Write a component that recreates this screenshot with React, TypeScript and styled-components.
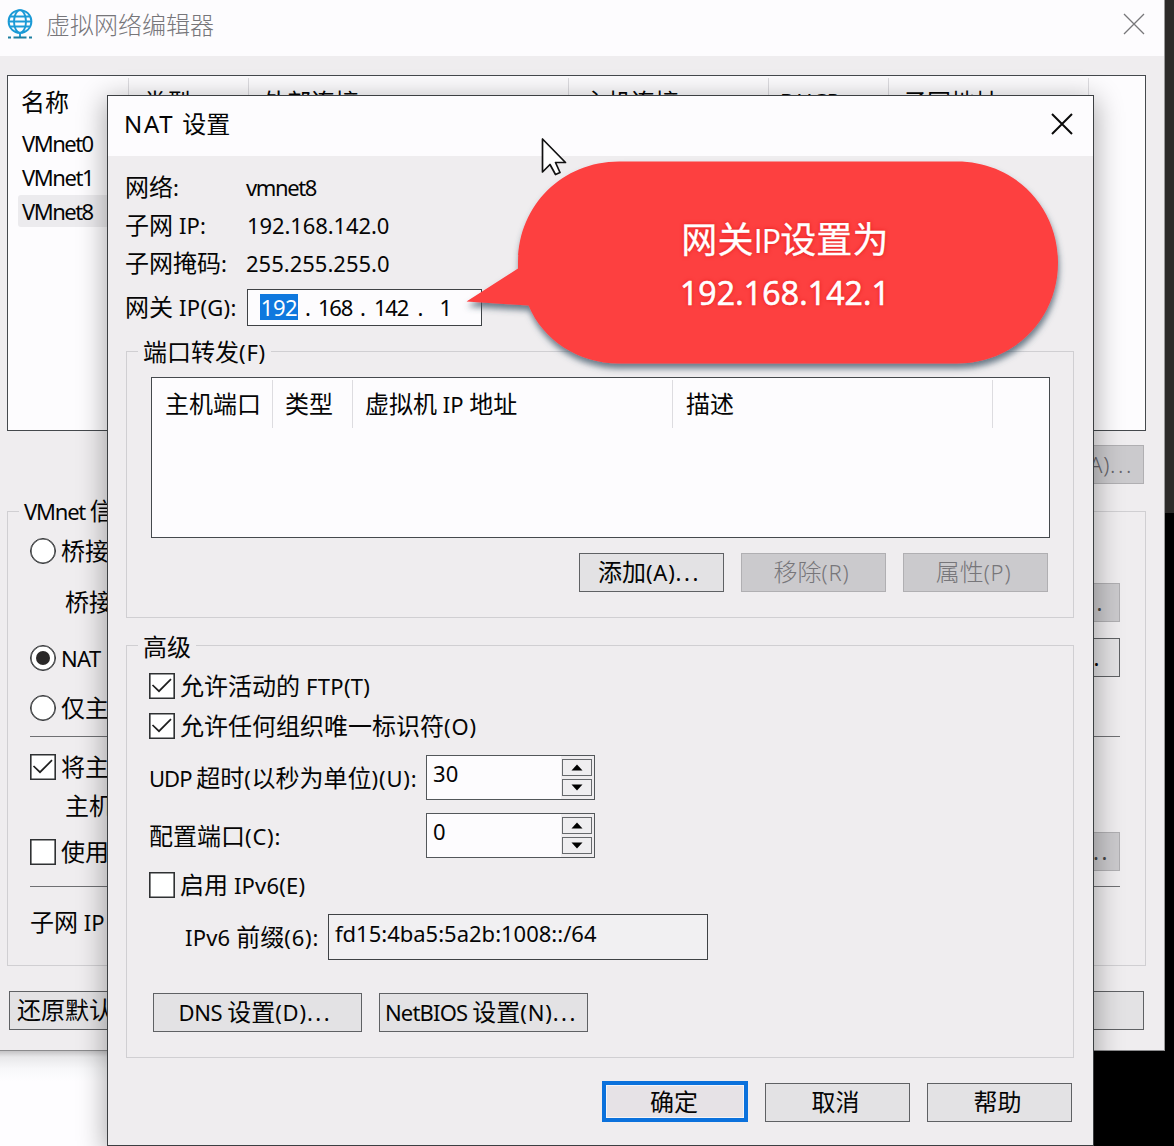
import React from "react";
import styled, { createGlobalStyle, css } from "styled-components";

const Global = createGlobalStyle`
  * { box-sizing: border-box; }
  html, body { margin: 0; padding: 0; overflow: hidden; }
  body { background: #000; font-family: "Noto Sans", "Noto Sans CJK SC", sans-serif; }
`;

const Desktop = styled.div`
  position: relative;
  width: 1174px;
  height: 1146px;
  overflow: hidden;
  background:
    linear-gradient(#2d2b29, #2d2b29) 1165px 0 / 9px 513px no-repeat,
    linear-gradient(#c4c3c5, #e8e8ea 6px, #f8f8fa 18px, #fefdff 30px) 0 1051px / 345px 95px no-repeat,
    #000;
`;

const Window = styled.section<{ $front?: boolean }>`
  position: absolute;
  display: flex;
  flex-direction: column;
  background: #efedef;
  ${(p) =>
    p.$front
      ? css`
          left: 107px; top: 95px; width: 987px; height: 1051px;
          border: 1px solid #3c3f42;
          box-shadow: 0 6px 26px 2px rgba(0, 0, 0, 0.32);
        `
      : css`
          left: 0; top: 0; width: 1165px; height: 1051px;
          border-right: 1px solid #9a9a9a;
          border-bottom: 1px solid #8b8b8d;
        `}
`;

const TitleBar = styled.header<{ $h: number; $pl: number; $pr: number; $pb: number }>`
  display: flex;
  align-items: center;
  flex: none;
  height: ${(p) => p.$h}px;
  padding: 0 ${(p) => p.$pr}px ${(p) => p.$pb}px ${(p) => p.$pl}px;
  background: #fdfcfe;
`;

const Spacer = styled.div`flex: 1;`;

const Line = styled.span<{ $size: number; $color: string; $weight: number; $dy: number }>`
  display: block;
  white-space: pre;
  line-height: 30px;
  font-size: ${(p) => p.$size}px;
  font-weight: ${(p) => p.$weight};
  color: ${(p) => p.$color};
  margin-top: ${(p) => p.$dy}px;
`;

const Latin = styled.span<{ $size: number; $ls: number }>`
  font-size: ${(p) => p.$size}px;
  letter-spacing: ${(p) => p.$ls}px;
`;

type TextProps = { children: string; size?: number; latin?: number; ls?: number; color?: string; weight?: number; dy?: number };

/* Chinese runs use the full size; Latin runs are slightly smaller with their own tracking. */
function Text({ children, size = 24, latin = 22, ls = 0.2, color = "#050505", weight = 400, dy = 0 }: TextProps) {
  const runs = children.split(/([\u3400-\u9fff]+|\.\.\.)/).filter(Boolean);
  return (
    <Line $size={size} $color={color} $weight={weight} $dy={dy}>
      {runs.map((r, i) =>
        /[\u3400-\u9fff]/.test(r) ? r : (
          <Latin key={i} $size={latin} $ls={r === "..." ? 2.6 : /^[()]/.test(r) ? 0.8 : ls}>{r}</Latin>
        )
      )}
    </Line>
  );
}

const Body = styled.div<{ $pl: number; $pr: number }>`
  display: flex;
  flex-direction: column;
  padding: 0 ${(p) => p.$pr}px 0 ${(p) => p.$pl}px;
`;

const Row = styled.div<{ $h?: number; $mt?: number; $pl?: number; $gap?: number; $end?: boolean; $pr?: number }>`
  display: flex;
  flex: none;
  align-items: ${(p) => (p.$end ? "flex-end" : "center")};
  justify-content: ${(p) => (p.$end ? "flex-end" : "flex-start")};
  height: ${(p) => p.$h ?? 30}px;
  margin-top: ${(p) => p.$mt ?? 0}px;
  padding-left: ${(p) => p.$pl ?? 0}px;
  padding-right: ${(p) => p.$pr ?? 0}px;
  gap: ${(p) => p.$gap ?? 0}px;
`;

const LabelCell = styled.div<{ $w: number }>`
  flex: none;
  width: ${(p) => p.$w}px;
`;

const Group = styled.div<{ $h: number; $mt: number; $pl: number; $pr: number; $ml?: number }>`
  display: flex;
  flex-direction: column;
  flex: none;
  height: ${(p) => p.$h}px;
  margin-top: ${(p) => p.$mt}px;
  margin-left: ${(p) => p.$ml ?? 0}px;
  padding: 0 ${(p) => p.$pr}px 0 ${(p) => p.$pl}px;
  border: 1px solid #d0cfd2;
`;

const Legend = styled.div<{ $ml: number; $up: number }>`
  width: fit-content;
  height: 30px;
  margin: -${(p) => p.$up}px 0 0 ${(p) => p.$ml}px;
  padding: 0 5px;
  background: #efedef;
`;

const ListBox = styled.div<{ $h: number; $w: number; $mt: number }>`
  flex: none;
  width: ${(p) => p.$w}px;
  height: ${(p) => p.$h}px;
  margin-top: ${(p) => p.$mt}px;
  border: 1px solid #45494d;
  background: #fdfcfe;
`;

const ListHead = styled.div`
  display: flex;
  height: 50px;
  padding-top: 2px;
`;

const Column = styled.div<{ $w: number; $pl?: number }>`
  display: flex;
  align-items: center;
  flex: none;
  height: 48px;
  width: ${(p) => p.$w}px;
  padding-left: ${(p) => p.$pl ?? 13}px;
  border-right: 1px solid #dddce0;
`;

const ListRow = styled.div<{ $selected?: boolean }>`
  display: flex;
  align-items: center;
  width: 240px;
  height: 32px;
  margin: 0 0 2px 10px;
  padding-left: 4px;
  border-radius: 3px;
  background: ${(p) => (p.$selected ? "#ecebee" : "transparent")};
`;

const Button = styled.button<{ $w: number; $kind?: "disabled" | "primary"; $left?: boolean; $tail?: number }>`
  display: flex;
  align-items: center;
  justify-content: center;
  flex: none;
  width: ${(p) => p.$w}px;
  height: 39px;
  padding: 0 4px 2px 0;
  font-family: inherit;
  border: 1px solid #5f6164;
  background: #e3e2e4;
  ${(p) => p.$kind === "disabled" && css`border-color: #b0afb2; background: #cbcacd;`}
  ${(p) => p.$kind === "primary" && css`height: 41px; padding: 0 2px 0 0; border: 4px solid #0b71dc; background: #e6e2e6; box-shadow: inset 0 0 0 1px #f4f4f8;`}
  ${(p) => p.$left && css`justify-content: flex-start; padding-left: 7px;`}
  ${(p) => p.$tail !== undefined && css`justify-content: flex-end; padding-right: ${p.$tail}px;`}
`;

const Field = styled.div<{ $w: number; $h: number; $plain?: boolean }>`
  display: flex;
  align-items: center;
  flex: none;
  width: ${(p) => p.$w}px;
  height: ${(p) => p.$h}px;
  padding: 0 0 0 6px;
  border: 1px solid #3f4245;
  background: ${(p) => (p.$plain ? "#f1f0f2" : "#fdfcfe")};
`;

const IpField = styled(Field)`
  padding: 0 0 0 12px;
`;

const Octet = styled.div<{ $w: number; $selected?: boolean }>`
  display: flex;
  justify-content: center;
  align-items: center;
  flex: none;
  width: ${(p) => p.$w}px;
  height: 26px;
  background: ${(p) => (p.$selected ? "#0f78de" : "transparent")};
`;

const SpinBox = styled.div`
  display: flex;
  width: 169px;
  height: 45px;
  border: 1px solid #53575a;
  background: #efedef;
`;
const SpinValue = styled.div`
  display: flex;
  align-items: center;
  width: 134px;
  padding-left: 6px;
  background: #fdfcfe;
`;
const SpinButtons = styled.div`
  display: flex;
  flex-direction: column;
  gap: 3px;
  padding: 3px 0 0 1px;
`;
const SpinButton = styled.div`
  display: flex;
  align-items: center;
  justify-content: center;
  width: 30px;
  height: 17px;
  border: 1px solid #66696c;
  background: #efeef0;
`;

const CheckSquare = styled.div`
  display: flex;
  align-items: center;
  justify-content: center;
  flex: none;
  width: 26px;
  height: 26px;
  margin-right: 5px;
  border: 1px solid #2f3133;
  box-shadow: inset 0 0 0 0.6px #2f3133;
  background: #fff;
`;
const RadioCircle = styled(CheckSquare)`
  border-radius: 50%;
`;
const RadioDot = styled.div`
  width: 14px;
  height: 14px;
  border-radius: 50%;
  background: #2a2828;
`;
const Divider = styled.div<{ $mt: number }>`
  flex: none;
  height: 1px;
  margin-top: ${(p) => p.$mt}px;
  margin-left: 22px;
  background: #6f7073;
`;

const Callout = styled.div`
  position: absolute;
  left: 460px;
  top: 155px;
  width: 615px;
  height: 225px;
`;
const CalloutText = styled.div`
  position: absolute;
  left: 58px;
  top: 6px;
  width: 540px;
  height: 203px;
  display: flex;
  flex-direction: column;
  align-items: center;
  padding: 52px 6px 0 0;
  color: #fff;
  font-family: "Open Sans", "Noto Sans CJK SC", sans-serif;
  text-shadow: 0 0 4px rgba(215, 0, 0, 0.65);
`;
const CalloutLine = styled.div`
  height: 53px;
  line-height: 53px;
  font-size: 32px;
  letter-spacing: 0.15px;
  white-space: nowrap;
  -webkit-text-stroke: 0.7px #fff;
`;
const CalloutCjk = styled.span`
  font-size: 36px;
  -webkit-text-stroke: 0.3px #fff;
`;
const CalloutIp = styled.span`
  letter-spacing: -0.8px;
  -webkit-text-stroke: 0.2px #fff;
`;
const CursorBox = styled.div`
  position: absolute;
  left: 540px;
  top: 136px;
  width: 30px;
  height: 42px;
`;

const CheckMark = () => (
  <svg width="22" height="22" viewBox="0 0 22 22" fill="none" stroke="#1f1f1f" strokeWidth="1.7">
    <path d="M1.500 10 L8 16.200 L20 4.200" />
  </svg>
);

function Check({ label, on, ls }: { label: string; on?: boolean; ls?: number }) {
  return (
    <>
      <CheckSquare>{on && <CheckMark />}</CheckSquare>
      <Text ls={ls}>{label}</Text>
    </>
  );
}

function Radio({ label, on }: { label: string; on?: boolean }) {
  return (
    <>
      <RadioCircle>{on && <RadioDot />}</RadioCircle>
      <Text ls={-0.6}>{label}</Text>
    </>
  );
}

const CloseIcon = ({ color, w }: { color: string; w: number }) => (
  <svg width="22" height="22" viewBox="0 0 22 22" stroke={color} strokeWidth={w} fill="none">
    <path d="M1 1 L21 21 M21 1 L1 21" />
  </svg>
);

const Globe = () => (
  <svg width="28" height="32" viewBox="0 0 28 32" fill="none" stroke="#1b9ad6" strokeWidth="1.9">
    <circle cx="14" cy="13.500" r="11.4" />
    <ellipse cx="14" cy="13.500" rx="6" ry="11.4" />
    <path d="M14 24.900V29 M4 8.500H24 M4 18.500H24 M2.600 13.500H25.400" />
    <path d="M2 29.500h3 M7.500 29.500H20.500 M23 29.500h3" stroke="#1d7fa0" strokeWidth="1.8" />
  </svg>
);

const Arrow = ({ down }: { down?: boolean }) => (
  <svg width="12" height="7" viewBox="0 0 12 7">
    <path d={down ? "M0.500 0.500H11.500L6 6.500Z" : "M0.500 6.500H11.500L6 0.500Z"} fill="#000" />
  </svg>
);

function Spin({ value }: { value: string }) {
  return (
    <SpinBox>
      <SpinValue><Text dy={-9}>{value}</Text></SpinValue>
      <SpinButtons>
        <SpinButton><Arrow /></SpinButton>
        <SpinButton><Arrow down /></SpinButton>
      </SpinButtons>
    </SpinBox>
  );
}

function EditorWindow() {
  return (
    <Window>
      <TitleBar $h={56} $pl={6} $pr={19} $pb={8}>
        <Globe />
        <LabelCell $w={12} />
        <Text color="#77767a" weight={300} dy={1}>虚拟网络编辑器</Text>
        <Spacer />
        <CloseIcon color="#77777a" w={1.3} />
      </TitleBar>
      <Body $pl={7} $pr={18}>
        <ListBox $w={1139} $h={356} $mt={19}>
          <ListHead>
            <Column $w={121}><Text>名称</Text></Column>
            <Column $w={120} $pl={14}><Text>类型</Text></Column>
            <Column $w={320} $pl={14}><Text>外部连接</Text></Column>
            <Column $w={200} $pl={14}><Text>主机连接</Text></Column>
            <Column $w={120} $pl={11}><Text dy={-2}>DHCP</Text></Column>
            <Column $w={200} $pl={14}><Text>子网地址</Text></Column>
          </ListHead>
          <Row $h={1} />
          <ListRow><Text ls={-1.5}>VMnet0</Text></ListRow>
          <ListRow><Text ls={-1.4}>VMnet1</Text></ListRow>
          <ListRow $selected><Text ls={-1.5}>VMnet8</Text></ListRow>
        </ListBox>
        <Row $h={39} $mt={14} $end $pr={2}>
          <Button $w={180} $kind="disabled" $tail={9}><Text color="#66656a" weight={300} ls={2}>添加网络(A)...</Text></Button>
        </Row>
        <Group $h={455} $mt={27} $pl={0} $pr={25}>
          <Legend $ml={11} $up={16}><Text ls={-1.2}>VMnet 信</Text></Legend>
          <Row $mt={10} $pl={22}><Radio label="桥接" /></Row>
          <Row $h={39} $mt={17} $pl={57}>
            <Text dy={-1}>桥接</Text><Spacer />
            <Button $w={120} $kind="disabled" $tail={14}><Text color="#444">自动设置...</Text></Button>
          </Row>
          <Row $h={39} $mt={16} $pl={22}>
            <Radio label="NAT" on /><Spacer />
            <Button $w={140} $tail={17}><Text>NAT 设置...</Text></Button>
          </Row>
          <Row $mt={16} $pl={22}><Radio label="仅主" /></Row>
          <Divider $mt={13} />
          <Row $mt={15} $pl={22}><Check label="将主" on /></Row>
          <Row $mt={9} $pl={57}><Text>主机</Text></Row>
          <Row $h={39} $mt={11} $pl={22}>
            <Check label="使用" /><Spacer />
            <Button $w={160} $kind="disabled" $tail={9}><Text color="#444">DHCP 设置...</Text></Button>
          </Row>
          <Divider $mt={15} />
          <Row $mt={20} $pl={22}><Text ls={0}>子网 IP</Text></Row>
        </Group>
        <Row $h={39} $mt={25} $pl={2}>
          <Button $w={160} $left><Text>还原默认</Text></Button>
          <Spacer />
          <Button $w={145} />
          <LabelCell $w={2} />
        </Row>
      </Body>
    </Window>
  );
}

function NatWindow() {
  return (
    <Window $front>
      <TitleBar $h={60} $pl={16} $pr={20} $pb={4}>
        <Text latin={24} ls={1.7}>NAT 设置</Text>
        <Spacer />
        <CloseIcon color="#0a0a0a" w={2} />
      </TitleBar>
      <Body $pl={17} $pr={19}>
        <Row $h={38} $mt={12}><LabelCell $w={121}><Text>网络:</Text></LabelCell><Text ls={-1.4}>vmnet8</Text></Row>
        <Row $h={38}><LabelCell $w={122}><Text>子网 IP:</Text></LabelCell><Text ls={-0.1}>192.168.142.0</Text></Row>
        <Row $h={38}><LabelCell $w={121}><Text ls={0.5}>子网掩码:</Text></LabelCell><Text ls={0}>255.255.255.0</Text></Row>
        <Row $h={38} $mt={6}>
          <LabelCell $w={122}><Text ls={0.3}>网关 IP(G):</Text></LabelCell>
          <IpField $w={235} $h={37}>
            <Octet $w={38} $selected><Text color="#fff" ls={-0.5}>192</Text></Octet>
            <Octet $w={20}><Text>.</Text></Octet>
            <Octet $w={34}><Text ls={-1.2}>168</Text></Octet>
            <Octet $w={22}><Text>.</Text></Octet>
            <Octet $w={34}><Text ls={-1.2}>142</Text></Octet>
            <Octet $w={25}><Text>.</Text></Octet>
            <Octet $w={26}><Text>1</Text></Octet>
          </IpField>
        </Row>
        <Group $h={267} $mt={25} $ml={1} $pl={24} $pr={23}>
          <Legend $ml={-13} $up={15}><Text>端口转发(F)</Text></Legend>
          <ListBox $w={899} $h={161} $mt={10}>
            <ListHead>
              <Column $w={121}><Text>主机端口</Text></Column>
              <Column $w={80} $pl={12}><Text>类型</Text></Column>
              <Column $w={320} $pl={12}><Text ls={0}>虚拟机 IP 地址</Text></Column>
              <Column $w={320}><Text>描述</Text></Column>
            </ListHead>
          </ListBox>
          <Row $h={39} $mt={15} $end $gap={17} $pr={2}>
            <Button $w={145}><Text>添加(A)...</Text></Button>
            <Button $w={145} $kind="disabled"><Text color="#77767a" weight={300}>移除(R)</Text></Button>
            <Button $w={145} $kind="disabled"><Text color="#77767a" weight={300}>属性(P)</Text></Button>
          </Row>
        </Group>
        <Group $h={413} $mt={27} $ml={1} $pl={22} $pr={23}>
          <Legend $ml={-11} $up={14}><Text>高级</Text></Legend>
          <Row $mt={9}><Check label="允许活动的 FTP(T)" on ls={0.3} /></Row>
          <Row $mt={10}><Check label="允许任何组织唯一标识符(O)" on /></Row>
          <Row $h={45} $mt={14}><LabelCell $w={277}><Text ls={-1}>UDP 超时(以秒为单位)(U):</Text></LabelCell><Spin value="30" /></Row>
          <Row $h={45} $mt={13}><LabelCell $w={277}><Text>配置端口(C):</Text></LabelCell><Spin value="0" /></Row>
          <Row $mt={12}><Check label="启用 IPv6(E)" /></Row>
          <Row $h={46} $mt={14} $pl={36}>
            <LabelCell $w={143}><Text>IPv6 前缀(6):</Text></LabelCell>
            <Field $w={380} $h={46} $plain><Text ls={0} dy={-8}>fd15:4ba5:5a2b:1008::/64</Text></Field>
          </Row>
          <Row $h={39} $mt={33} $pl={4} $gap={17}>
            <Button $w={209}><Text ls={-0.5}>DNS 设置(D)...</Text></Button>
            <Button $w={209}><Text ls={-0.8}>NetBIOS 设置(N)...</Text></Button>
          </Row>
        </Group>
        <Row $h={41} $mt={23} $gap={17} $end $pr={2}>
          <Button $w={146} $kind="primary"><Text>确定</Text></Button>
          <Button $w={145}><Text>取消</Text></Button>
          <Button $w={145}><Text>帮助</Text></Button>
        </Row>
      </Body>
    </Window>
  );
}

export default function App() {
  return (
    <>
      <Global />
      <Desktop>
        <EditorWindow />
        <NatWindow />
        <Callout>
          <svg width="615" height="225" viewBox="460 155 615 225">
            <defs>
              <filter id="shade" x="-5%" y="-10%" width="112%" height="125%">
                <feDropShadow dx="1" dy="5" stdDeviation="3" floodColor="#3c5566" floodOpacity="0.75" />
              </filter>
            </defs>
            <path
              filter="url(#shade)"
              fill="#fd3f40"
              d="M619 161.500H957C1014 161.500 1058 206 1058 262.500C1058 319 1014 363.500 957 363.500H619C578 363.500 543 340 528.500 305.500L466.500 301.500L518 268.500V262.500C518 206 562 161.500 619 161.500Z"
            />
          </svg>
          <CalloutText>
            <CalloutLine><CalloutCjk>网关</CalloutCjk><CalloutIp>IP</CalloutIp><CalloutCjk>设置为</CalloutCjk></CalloutLine>
            <CalloutLine>192.168.142.1</CalloutLine>
          </CalloutText>
        </Callout>
        <CursorBox>
          <svg width="30" height="42" viewBox="0 0 30 42">
            <path d="M2.500 3V36L10 28.500L15.500 38.500L20 36.500L15.500 26.500H25.500Z" fill="#fff" stroke="#111" strokeWidth="1.700" strokeLinejoin="round" />
          </svg>
        </CursorBox>
      </Desktop>
    </>
  );
}
